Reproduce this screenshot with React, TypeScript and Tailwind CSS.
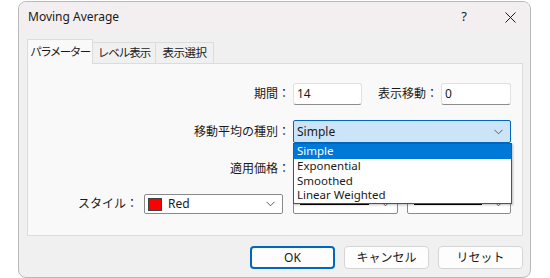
const font = { fontFamily: '"Noto Sans", "Noto Sans CJK JP", sans-serif' };

function Chevron({ className = "" }: { className?: string }) {
  return (
    <svg width="9" height="6" viewBox="0 0 9 6" className={className}>
      <path d="M0.5 0.8 L4.5 4.8 L8.5 0.8" fill="none" stroke="#5f5f5f" strokeWidth="1" />
    </svg>
  );
}

function Input({ value, width }: { value: string; width: string }) {
  return (
    <div
      className={`${width} h-[22px] bg-white border border-[#e0e0e0] border-b-[#8c8c8c] rounded-[3px] pl-[3px] flex items-center text-[12px] text-[#1a1a1a]`}
    >
      {value}
    </div>
  );
}

function LineCombo({ width }: { width: string }) {
  return (
    <div
      className={`${width} h-[20px] bg-white border border-[#8a8a8a] rounded-[2px] flex items-center pl-[6px] pr-[7px] gap-[12px]`}
    >
      <div className="flex-1 h-[2px] bg-black" />
      <Chevron />
    </div>
  );
}

function Button({ label, primary }: { label: string; primary?: boolean }) {
  return (
    <div
      className={`w-[85px] h-[23px] rounded-[4px] bg-[#fdfdfd] flex items-center justify-center text-[12px] text-[#1a1a1a] ${
        primary ? "border-2 border-[#0067c0]" : "border border-[#d5d5d5]"
      }`}
    >
      {label}
    </div>
  );
}

export default function App() {
  return (
    <div className="w-[550px] h-[278px] bg-white overflow-hidden" style={font}>
      <div className="ml-[18px] mt-[1px] w-[513px] h-[277px] border border-[#b9b9b9] rounded-[8px] bg-[#f0f0f0] overflow-hidden flex flex-col">
        {/* title bar */}
        <div className="h-[30px] bg-[#f3eff0] flex items-center pl-[9px] pr-[14px] text-[12px] text-[#1a1a1a]">
          <span className="flex-1">Moving Average</span>
          <span className="text-[13px] mr-[38px]">?</span>
          <svg width="11" height="11" viewBox="0 0 11 11">
            <path d="M0.5 0.5 L10.5 10.5 M10.5 0.5 L0.5 10.5" stroke="#1a1a1a" strokeWidth="1" />
          </svg>
        </div>

        <div className="pl-[8px] pt-[7px]">
          {/* tabs */}
          <div className="flex items-end h-[24px] text-[11.5px] text-[#1a1a1a] whitespace-nowrap">
            <div className="relative z-10 h-[25px] -mb-px w-[66px] bg-[#f9f9f9] border border-[#dcdcdc] border-b-0 flex items-center justify-center tracking-[-1.5px]">
              パラメーター
            </div>
            <div className="h-[21px] w-[63px] border border-[#dcdcdc] border-l-0 border-b-0 flex items-center justify-center tracking-[-1px]">
              レベル表示
            </div>
            <div className="h-[21px] w-[58px] border border-[#dcdcdc] border-l-0 border-b-0 flex items-center justify-center tracking-[-0.5px]">
              表示選択
            </div>
          </div>

          {/* panel */}
          <div className="relative w-[496px] h-[173px] bg-[#f9f9f9] border border-[#dcdcdc] text-[12px] text-[#1a1a1a]">
            <div className="pt-[19px] flex items-center">
              <div className="w-[262px] text-right">期間：</div>
              <div className="ml-[3px]">
                <Input value="14" width="w-[69px]" />
              </div>
              <div className="w-[76px] text-right">表示移動：</div>
              <div className="ml-[3px]">
                <Input value="0" width="w-[70px]" />
              </div>
            </div>

            <div className="mt-[15px] flex items-center">
              <div className="w-[262px] text-right">移動平均の種別：</div>
              <div className="ml-[3px] w-[218px] h-[23px] bg-[#cce4f7] border border-[#0067c0] rounded-[2px] pl-[3px] pr-[7px] flex items-center justify-between">
                <span>Simple</span>
                <Chevron />
              </div>
            </div>

            <div className="mt-[15px] flex items-center">
              <div className="w-[262px] text-right">適用価格：</div>
              <div className="ml-[3px] w-[218px] h-[22px] bg-white border border-[#8a8a8a] rounded-[2px]" />
            </div>

            <div className="mt-[14px] flex items-center">
              <div className="w-[110px] text-right">スタイル：</div>
              <div className="ml-[6px] w-[139px] h-[20px] bg-white border border-[#8a8a8a] rounded-[2px] flex items-center pl-[3px] pr-[7px]">
                <div className="w-[14px] h-[13px] bg-[#ff0000] border border-[#404040]" />
                <span className="ml-[6px] flex-1">Red</span>
                <Chevron />
              </div>
              <div className="ml-[10px]">
                <LineCombo width="w-[105px]" />
              </div>
              <div className="ml-[9px]">
                <LineCombo width="w-[104px]" />
              </div>
            </div>

            {/* open dropdown list */}
            <div className="absolute left-[265px] top-[79px] w-[219px] h-[61px] bg-white border border-[#0067c0] shadow-[1px_1px_2px_rgba(0,0,0,0.25)] flex flex-col text-[11.5px]">
              <div className="h-[15px] bg-[#0078d7] text-white pl-[3px] leading-[14px] overflow-hidden">Simple</div>
              <div className="h-[15px] pl-[3px] leading-[14px] overflow-hidden">Exponential</div>
              <div className="h-[15px] pl-[3px] leading-[14px] overflow-hidden">Smoothed</div>
              <div className="h-[15px] pl-[3px] leading-[14px] overflow-hidden">Linear Weighted</div>
            </div>
          </div>

          {/* buttons */}
          <div className="mt-[10px] flex justify-end gap-[9px] w-[496px]">
            <Button label="OK" primary />
            <Button label="キャンセル" />
            <Button label="リセット" />
          </div>
        </div>
      </div>
    </div>
  );
}
